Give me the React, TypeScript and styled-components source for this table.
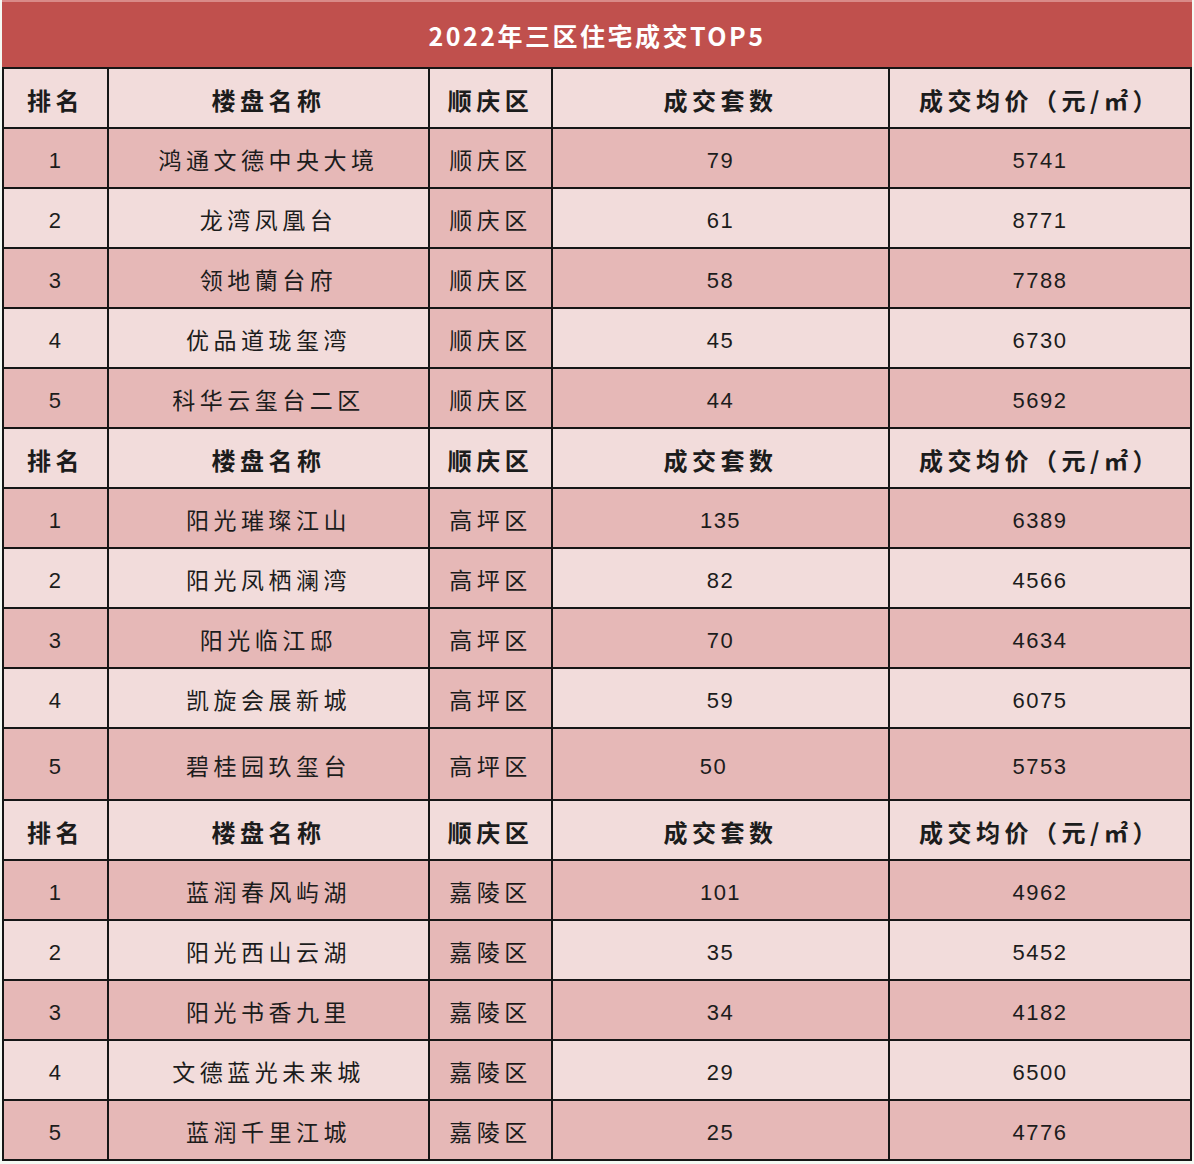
import React from "react";
import styled, { createGlobalStyle } from "styled-components";

const GlobalStyle = createGlobalStyle`
    html, body {
        margin: 0;
        padding: 0;
        background: #f4f9f3;
    }
    body {
        font-family: "Liberation Sans", "Noto Sans CJK SC", sans-serif;
        color: #1c1c1c;
    }
`;

type Tone = "light" | "dark";

interface Row {
    rank: number;
    name: string;
    district: string;
    count: number;
    price: number;
    tall?: boolean;
}

interface Group {
    header: string[];
    rows: Row[];
}

const HEADER = ["排名", "楼盘名称", "顺庆区", "成交套数", "成交均价（元/㎡）"];

const groups: Group[] = [
    {
        header: HEADER,
        rows: [
            { rank: 1, name: "鸿通文德中央大境", district: "顺庆区", count: 79, price: 5741 },
            { rank: 2, name: "龙湾凤凰台", district: "顺庆区", count: 61, price: 8771 },
            { rank: 3, name: "领地蘭台府", district: "顺庆区", count: 58, price: 7788 },
            { rank: 4, name: "优品道珑玺湾", district: "顺庆区", count: 45, price: 6730 },
            { rank: 5, name: "科华云玺台二区", district: "顺庆区", count: 44, price: 5692 },
        ],
    },
    {
        header: HEADER,
        rows: [
            { rank: 1, name: "阳光璀璨江山", district: "高坪区", count: 135, price: 6389 },
            { rank: 2, name: "阳光凤栖澜湾", district: "高坪区", count: 82, price: 4566 },
            { rank: 3, name: "阳光临江邸", district: "高坪区", count: 70, price: 4634 },
            { rank: 4, name: "凯旋会展新城", district: "高坪区", count: 59, price: 6075 },
            { rank: 5, name: "碧桂园玖玺台", district: "高坪区", count: 50, price: 5753, tall: true },
        ],
    },
    {
        header: HEADER,
        rows: [
            { rank: 1, name: "蓝润春风屿湖", district: "嘉陵区", count: 101, price: 4962 },
            { rank: 2, name: "阳光西山云湖", district: "嘉陵区", count: 35, price: 5452 },
            { rank: 3, name: "阳光书香九里", district: "嘉陵区", count: 34, price: 4182 },
            { rank: 4, name: "文德蓝光未来城", district: "嘉陵区", count: 29, price: 6500 },
            { rank: 5, name: "蓝润千里江城", district: "嘉陵区", count: 25, price: 4776 },
        ],
    },
];

export default function App() {
    return (
        <>
            <GlobalStyle />
            <Page>
                <Table>
                    <Title>2022年三区住宅成交TOP5</Title>
                    {groups.map((group, gi) => (
                        <React.Fragment key={gi}>
                            {group.header.map((h, i) => (
                                <HeadCell key={`h${i}`}>{h}</HeadCell>
                            ))}
                            {group.rows.map((row) => {
                                const tone: Tone = row.rank % 2 === 1 ? "dark" : "light";
                                return (
                                    <React.Fragment key={row.rank}>
                                        <Cell $tone={tone} $tall={row.tall}>{row.rank}</Cell>
                                        <Cell $tone={tone} $tall={row.tall} $cjk>{row.name}</Cell>
                                        <Cell $tone="dark" $tall={row.tall} $cjk>{row.district}</Cell>
                                        <Cell $tone={tone} $tall={row.tall} $nudge={row.tall ? 14 : 0}>{row.count}</Cell>
                                        <Cell $tone={tone} $tall={row.tall}>{row.price}</Cell>
                                    </React.Fragment>
                                );
                            })}
                        </React.Fragment>
                    ))}
                </Table>
            </Page>
        </>
    );
}

const Page = styled.div`
    padding-left: 2px;
    width: 1190px;
`;

const Table = styled.div`
    display: grid;
    grid-template-columns: 103px 319px 121px 335px 300px;
    column-gap: 2px;
    row-gap: 2px;
    padding: 0 2px 2px 2px;
    background: #161616;
`;

const Title = styled.div`
    grid-column: 1 / -1;
    height: 65px;
    border-top: 2px solid #d98a88;
    margin: 0 -2px;
    padding: 0 2px;
    background: #c0504d;
    color: #ffffff;
    display: flex;
    align-items: center;
    justify-content: center;
    font-family: "Noto Sans CJK SC", sans-serif;
    font-weight: 700;
    font-size: 25px;
    letter-spacing: 2.5px;
`;

const HeadCell = styled.div`
    height: 58px;
    background: #f2dcdb;
    display: flex;
    align-items: center;
    justify-content: center;
    padding-top: 2px;
    box-sizing: border-box;
    font-family: "Noto Sans CJK SC", sans-serif;
    font-weight: 700;
    font-size: 24px;
    letter-spacing: 4.5px;
`;

const Cell = styled.div<{ $tone: Tone; $tall?: boolean; $cjk?: boolean; $nudge?: number }>`
    height: ${(p) => (p.$tall ? 70 : 58)}px;
    background: ${(p) => (p.$tone === "dark" ? "#e6b8b7" : "#f2dcdb")};
    display: flex;
    align-items: center;
    justify-content: center;
    padding-top: ${(p) => (p.$cjk ? 2 : 5)}px;
    padding-right: ${(p) => p.$nudge ?? 0}px;
    box-sizing: border-box;
    font-family: ${(p) =>
        p.$cjk ? `"Noto Sans CJK SC", sans-serif` : `"Liberation Sans", "Noto Sans CJK SC", sans-serif`};
    font-size: ${(p) => (p.$cjk ? 23 : 22)}px;
    letter-spacing: ${(p) => (p.$cjk ? 4.5 : 1.5)}px;
`;
